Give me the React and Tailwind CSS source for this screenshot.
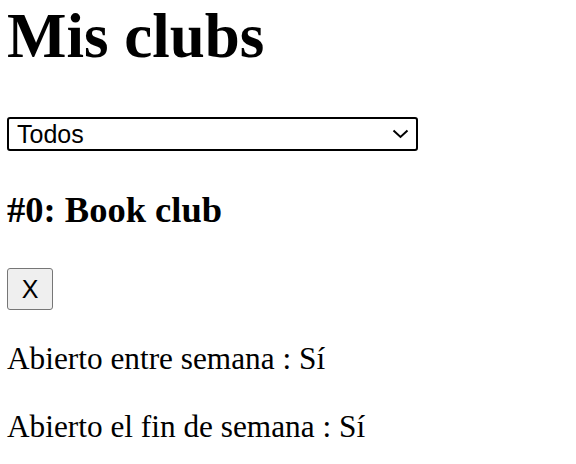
export default function App() {
  return (
    <div className="min-h-[464px] bg-white pl-[7px] text-black">
      <h1 className="m-0 h-[72px] text-[63px] leading-[72px] font-bold font-['Liberation_Serif',serif]">
        Mis clubs
      </h1>

      <div className="relative mt-[45px] h-[34px] w-[411px]">
        <select className="h-[34px] w-full appearance-none rounded-[3px] border-2 border-black bg-white pl-[8px] text-[25px] leading-[28px] font-['Liberation_Sans',sans-serif] text-black outline-none">
          <option>Todos</option>
          <option>Entre semana</option>
          <option>Fin de semana</option>
        </select>
        <svg
          className="pointer-events-none absolute right-[9px] top-[12px] h-[10px] w-[17px]"
          viewBox="0 0 17 10"
          fill="none"
          stroke="black"
          strokeWidth="2"
        >
          <path d="M1.5 1.5 L8.5 8 L15.5 1.5" />
        </svg>
      </div>

      <h3 className="mt-[38px] h-[42px] text-[36.5px] leading-[42px] font-bold font-['Liberation_Serif',serif]">
        #0: Book club
      </h3>

      <button className="mt-[37px] flex h-[42px] w-[46px] items-center justify-center rounded-[3px] border border-[#767676] bg-[#efefef] text-[25px] leading-none font-['Liberation_Sans',sans-serif]">
        X
      </button>

      <p className="mt-[31px] h-[36px] text-[31.3px] leading-[36px] font-['Liberation_Serif',serif]">
        Abierto entre semana : Sí
      </p>
      <p className="mt-[32px] h-[36px] text-[31.3px] leading-[36px] font-['Liberation_Serif',serif]">
        Abierto el fin de semana : Sí
      </p>
    </div>
  );
}
